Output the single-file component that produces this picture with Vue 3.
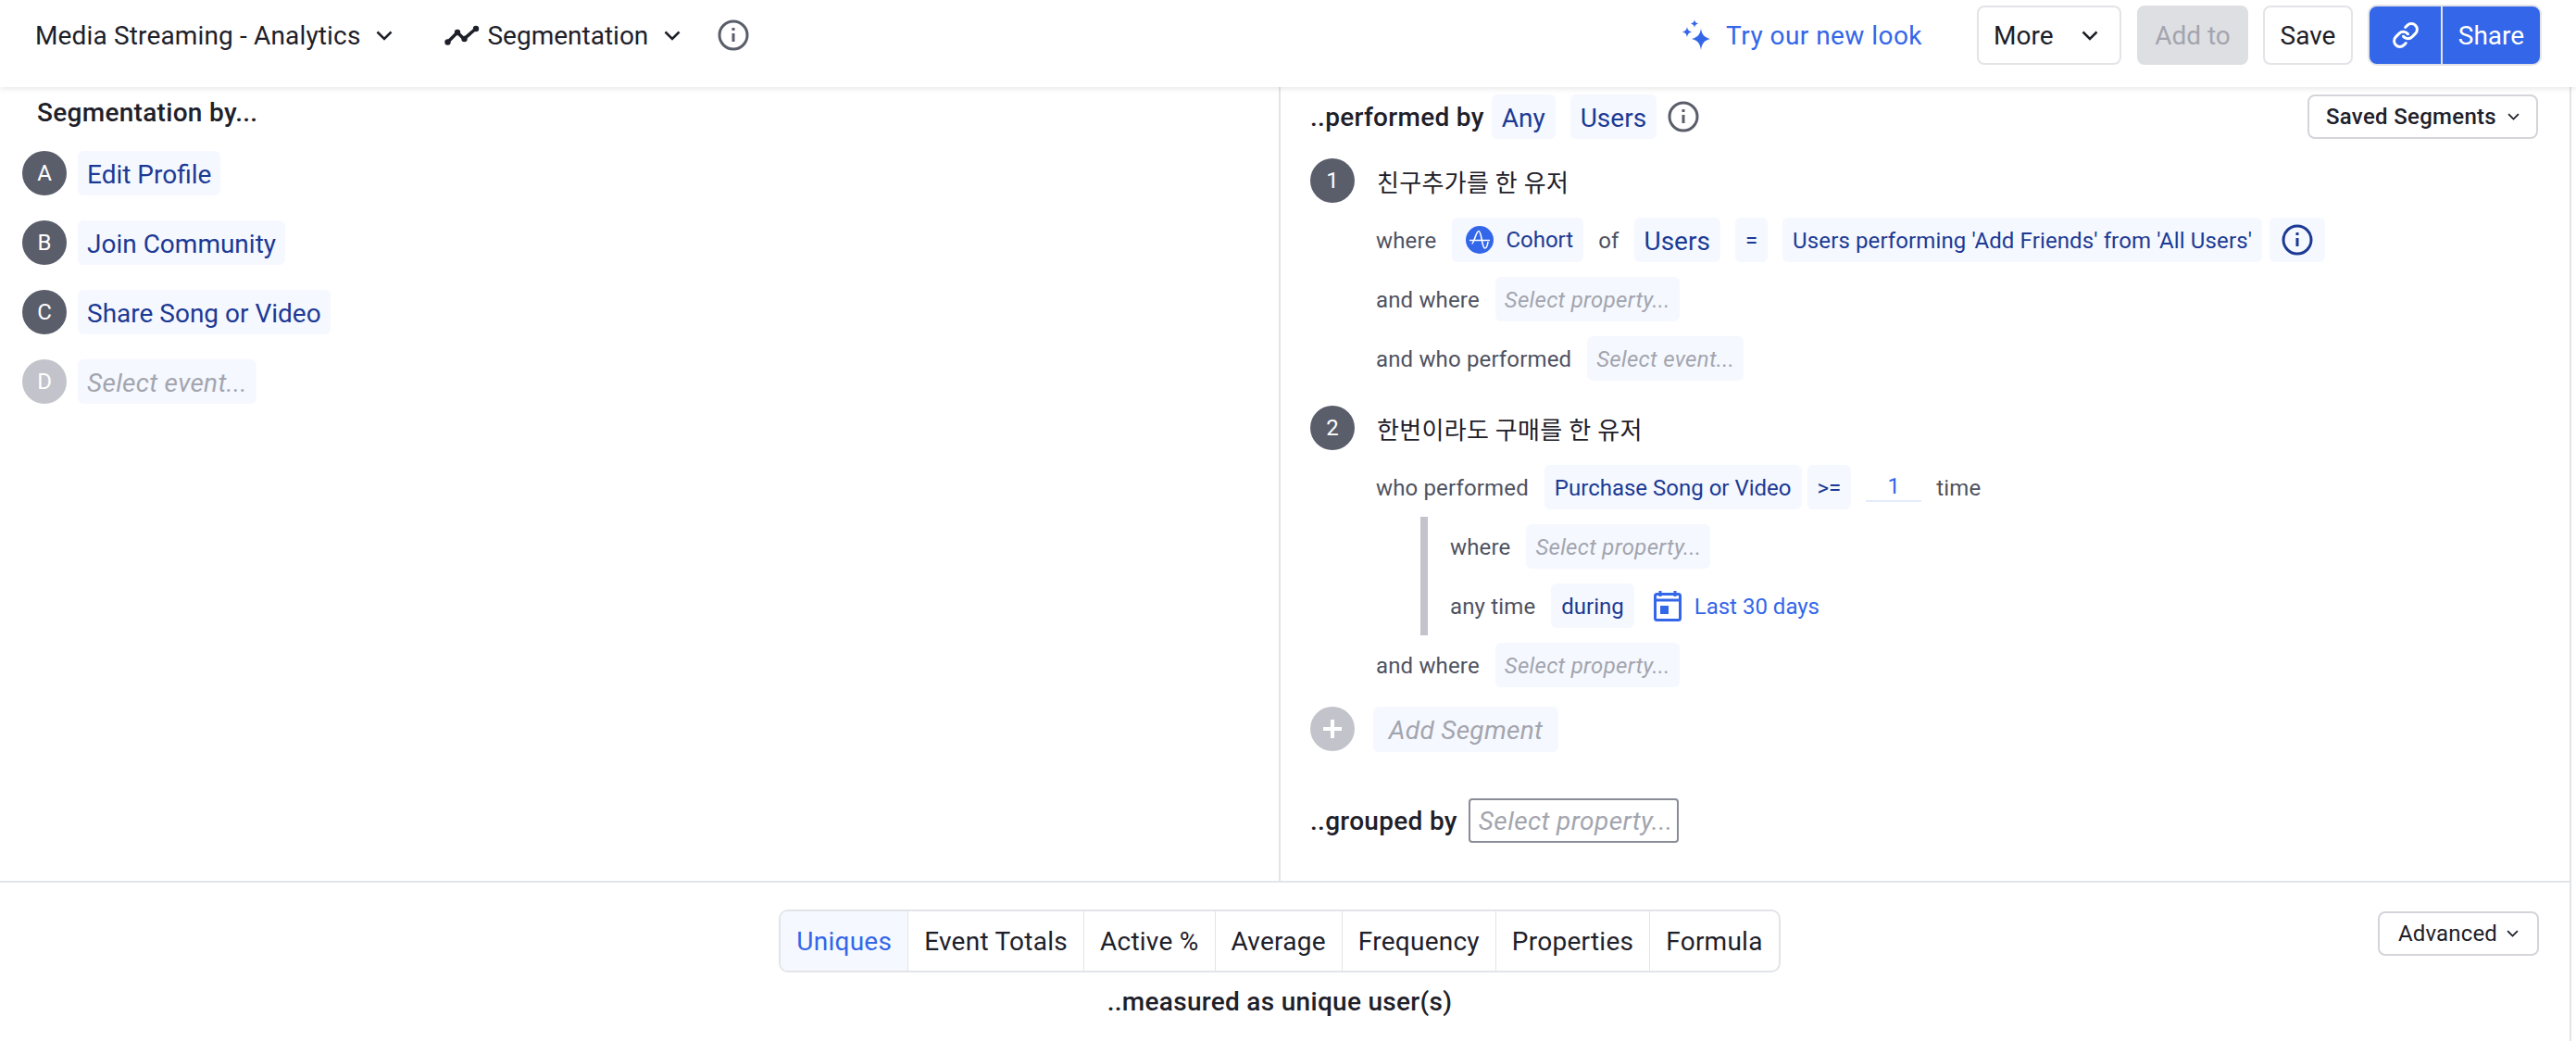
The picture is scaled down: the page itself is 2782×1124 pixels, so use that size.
<script setup>
const events = [
  { key: 'A', name: 'Edit Profile' },
  { key: 'B', name: 'Join Community' },
  { key: 'C', name: 'Share Song or Video' },
  { key: 'D', name: 'Select event...', empty: true },
];

const tabs = ['Uniques', 'Event Totals', 'Active %', 'Average', 'Frequency', 'Properties', 'Formula'];
</script>

<template>
  <div class="page">
    <header class="topbar">
      <div class="topbar-left">
        <span class="project">Media Streaming - Analytics</span>
        <svg class="chevron" width="18" height="11" viewBox="0 0 18 11"><path d="M1.5 1.5 9 9l7.5-7.5" /></svg>
        <svg class="chart-icon" width="38" height="22" viewBox="0 0 38 22">
          <path d="M3 19 14 8l7 7L34 4" fill="none" stroke="#1e2029" stroke-width="3.5" />
          <circle cx="3.5" cy="18.5" r="3.2" fill="#1e2029" />
          <circle cx="14" cy="8" r="3.2" fill="#1e2029" />
          <circle cx="21.5" cy="15" r="3.2" fill="#1e2029" />
          <circle cx="34" cy="4" r="3.2" fill="#1e2029" />
        </svg>
        <span class="chart-name">Segmentation</span>
        <svg class="chevron" width="18" height="11" viewBox="0 0 18 11"><path d="M1.5 1.5 9 9l7.5-7.5" /></svg>
        <svg class="info top-info" width="34" height="34" viewBox="0 0 34 34">
          <circle cx="17" cy="17" r="15" />
          <path d="M17 15v9M17 9v3" />
        </svg>
      </div>
      <div class="topbar-right">
        <a class="new-look">
          <svg width="34" height="34" viewBox="0 0 34 34" fill="#3366e8">
            <path d="M22 10c1 6 3 9 10 11-7 2-9 5-10 12-1-7-3-10-10-12 7-2 9-5 10-11Z" />
            <path d="M7 8c.5 3 1.500 4.500 5 5.500-3.500 1-4.500 2.500-5 6-.5-3.500-1.500-5-5-6 3.500-1 4.500-2.500 5-5.500Z" />
            <path d="M15 0c.4 2.500 1.200 3.700 4 4.500-2.800.8-3.600 2-4 4.500-.4-2.500-1.200-3.700-4-4.500 2.800-.8 3.600-2 4-4.500Z" />
          </svg>
          <span>Try our new look</span>
        </a>
        <button class="btn more">
          More
          <svg class="chevron" width="18" height="11" viewBox="0 0 18 11"><path d="M1.500 1.500 9 9l7.500-7.500" /></svg>
        </button>
        <button class="btn add-to">Add to</button>
        <button class="btn save">Save</button>
        <div class="share-group">
          <button class="share-link">
            <svg width="30" height="30" viewBox="0 0 24 24" fill="none" stroke="#fff" stroke-width="2.400" stroke-linecap="round">
              <path d="M10 13a5 5 0 0 0 7.540.54l3-3a5 5 0 0 0-7.070-7.070l-1.720 1.710" />
              <path d="M14 11a5 5 0 0 0-7.540-.54l-3 3a5 5 0 0 0 7.070 7.070l1.710-1.710" />
            </svg>
          </button>
          <button class="share-text">Share</button>
        </div>
      </div>
    </header>

    <main class="panes">
      <section class="left-pane">
        <h3 class="left-title">Segmentation by...</h3>
        <div v-for="ev in events" :key="ev.key" class="event-row">
          <span class="badge" :class="{ light: ev.empty }">{{ ev.key }}</span>
          <span class="chip" :class="{ placeholder: ev.empty }">{{ ev.name }}</span>
        </div>
      </section>

      <section class="right-pane">
        <div class="performed">
          <span class="strong">..performed by</span>
          <span class="chip any">Any</span>
          <span class="chip users">Users</span>
          <svg class="info perf-info" width="34" height="34" viewBox="0 0 34 34">
            <circle cx="17" cy="17" r="15" />
            <path d="M17 15v9M17 9v3" />
          </svg>
          <button class="small-btn saved">
            Saved Segments
            <svg class="chevron" width="13" height="8" viewBox="0 0 18 11"><path d="M1.500 1.500 9 9l7.500-7.500" /></svg>
          </button>
        </div>

        <div class="segment-head first">
          <span class="badge">1</span>
          <span class="segment-name">친구추가를 한 유저</span>
        </div>
        <div class="clause">
          <span class="word">where</span>
          <span class="chip sm cohort">
            <svg width="30" height="30" viewBox="0 0 30 30">
              <circle cx="15" cy="15" r="15" fill="#3366e8" />
              <path d="M4 15.500h22M6.500 19C9 19 11 5.500 14 5.500S17.500 24 20.500 24c1.800 0 3-3 3.500-7" fill="none" stroke="#fff" stroke-width="1.600" />
            </svg>
            Cohort
          </span>
          <span class="word of">of</span>
          <span class="chip users-mid">Users</span>
          <span class="chip sm eq">=</span>
          <span class="chip sm long">Users performing 'Add Friends' from 'All Users'</span>
          <span class="chip info-chip">
            <svg class="info navy" width="34" height="34" viewBox="0 0 34 34">
              <circle cx="17" cy="17" r="15" />
              <path d="M17 15v9M17 9v3" />
            </svg>
          </span>
        </div>
        <div class="clause">
          <span class="word">and where</span>
          <span class="chip sm placeholder">Select property...</span>
        </div>
        <div class="clause">
          <span class="word">and who performed</span>
          <span class="chip sm placeholder">Select event...</span>
        </div>

        <div class="segment-head second">
          <span class="badge">2</span>
          <span class="segment-name">한번이라도 구매를 한 유저</span>
        </div>
        <div class="clause">
          <span class="word">who performed</span>
          <span class="chip sm">Purchase Song or Video</span>
          <span class="chip sm gte">&gt;=</span>
          <span class="count">1</span>
          <span class="word time">time</span>
        </div>
        <div class="nested">
          <div class="clause">
            <span class="word">where</span>
            <span class="chip sm placeholder">Select property...</span>
          </div>
          <div class="clause">
            <span class="word">any time</span>
            <span class="chip sm">during</span>
            <svg class="calendar" width="30" height="34" viewBox="0 0 30 34">
              <path d="M7 1v6M23 1v6" stroke="#3366e8" stroke-width="3" />
              <rect x="1.500" y="4.500" width="27" height="28" rx="2" fill="none" stroke="#3366e8" stroke-width="3" />
              <path d="M2 11h26" stroke="#3366e8" stroke-width="3" />
              <rect x="7" y="17" width="9" height="9" fill="#3366e8" />
            </svg>
            <span class="date-range">Last 30 days</span>
          </div>
        </div>
        <div class="clause">
          <span class="word">and where</span>
          <span class="chip sm placeholder">Select property...</span>
        </div>

        <div class="add-segment">
          <span class="badge light">
            <svg width="20" height="20" viewBox="0 0 20 20"><path d="M10 0v20M0 10h20" stroke="#fff" stroke-width="4" /></svg>
          </span>
          <span class="chip placeholder add-chip">Add Segment</span>
        </div>

        <div class="grouped">
          <span class="strong">..grouped by</span>
          <span class="group-input">Select property...</span>
        </div>
      </section>
    </main>

    <footer class="bottom">
      <div></div>
      <div class="measure">
        <div class="tabs">
          <span v-for="(tab, i) in tabs" :key="tab" class="tab" :class="{ active: i === 0 }">{{ tab }}</span>
        </div>
        <div class="measured">..measured as unique user(s)</div>
      </div>
      <button class="small-btn advanced">
        Advanced
        <svg class="chevron" width="13" height="8" viewBox="0 0 18 11"><path d="M1.500 1.500 9 9l7.500-7.500" /></svg>
      </button>
    </footer>
  </div>
</template>

<style scoped>
.page {
  width: 2782px;
  height: 1124px;
  background: #fff;
  color: #1e2029;
  font-family: "Roboto", "Noto Sans CJK KR", sans-serif;
  font-size: 28px;
  overflow: hidden;
}

button {
  font-family: inherit;
  cursor: pointer;
}

.topbar {
  position: relative;
  height: 94px;
  box-sizing: border-box;
  padding: 5px 37px 0 38px;
  display: flex;
  justify-content: space-between;
  align-items: flex-start;
  box-shadow: 0 2px 6px rgba(0, 0, 0, 0.09);
}

.topbar-left,
.topbar-right {
  display: flex;
  align-items: center;
  height: 66px;
}

.project {
  letter-spacing: 0.15px;
}

.chevron {
  flex: none;
}

.chevron path {
  fill: none;
  stroke: #1e2029;
  stroke-width: 2.500;
}

.topbar-left .chevron {
  margin-left: 17px;
}

.chart-icon {
  margin-left: 56px;
  margin-right: 8px;
}

.top-info {
  margin-left: 40px;
}

.info {
  flex: none;
}

.info circle,
.info path {
  fill: none;
  stroke: #5a5e6b;
  stroke-width: 3;
}

.info.navy circle,
.info.navy path {
  stroke: #1c3a94;
}

.new-look {
  display: flex;
  align-items: center;
  gap: 15px;
  color: #3366e8;
  letter-spacing: 0.45px;
  margin-right: 59px;
}

.btn {
  height: 64px;
  box-sizing: border-box;
  background: #fff;
  border: 2px solid #e3e4e8;
  border-radius: 8px;
  font-size: 28px;
  color: #1e2029;
  padding: 0;
}

.more {
  width: 156px;
  padding: 0 23px 0 16px;
  display: flex;
  align-items: center;
  justify-content: space-between;
}

.add-to {
  width: 120px;
  margin-left: 17px;
  background: #dedfe3;
  border-color: #dedfe3;
  color: #a3a5ae;
}

.save {
  width: 97px;
  margin-left: 16px;
}

.share-group {
  display: flex;
  width: 188px;
  height: 66px;
  box-sizing: border-box;
  margin-left: 16px;
  border: 2px solid #e3e4e8;
  border-radius: 10px;
  background: #3366e8;
  overflow: hidden;
}

.share-link,
.share-text {
  border: none;
  background: none;
  color: #fff;
  font-size: 28px;
  padding: 0;
  display: flex;
  align-items: center;
  justify-content: center;
}

.share-link {
  width: 79px;
  border-right: 2px solid #e3e4e8;
}

.share-text {
  flex: 1;
}

.panes {
  display: flex;
  width: 2777px;
  height: 857px;
  box-sizing: border-box;
  border-right: 2px solid #e3e4e8;
}

.left-pane {
  width: 1383px;
  box-sizing: border-box;
  padding: 8px 0 0 24px;
  border-right: 2px solid #e3e4e8;
  flex: none;
}

.left-title {
  margin: 0 0 21px 16px;
  height: 40px;
  line-height: 40px;
  font-size: 28px;
  font-weight: 500;
  letter-spacing: 0.3px;
}

.event-row {
  display: flex;
  gap: 12px;
  margin-bottom: 27px;
}

.badge {
  flex: none;
  width: 48px;
  height: 48px;
  border-radius: 50%;
  background: #5a5e6b;
  color: #fff;
  font-size: 24px;
  display: flex;
  align-items: center;
  justify-content: center;
}

.badge.light {
  background: #c3c4cb;
}

.chip {
  height: 48px;
  box-sizing: border-box;
  padding: 2px 10px 0;
  border-radius: 6px;
  background: #f5f8ff;
  color: #1c3a94;
  font-size: 28px;
  display: inline-flex;
  align-items: center;
  white-space: nowrap;
}

.chip.sm {
  font-size: 24px;
  padding: 2px 11px 0;
}

.chip.placeholder {
  color: #a3a5ae;
  font-style: italic;
  letter-spacing: 0.3px;
}

.chip.sm.placeholder {
  padding: 2px 10px 0;
}

.right-pane {
  flex: 1;
  box-sizing: border-box;
  padding: 8px 34px 0 32px;
}

.strong {
  font-size: 28px;
  font-weight: 500;
  letter-spacing: 0.3px;
  white-space: nowrap;
}

.performed {
  display: flex;
  align-items: center;
  height: 48px;
}

.any {
  margin-left: 8px;
  padding: 2px 11px 0;
}

.users {
  margin-left: 16px;
  padding: 2px 11px 0;
}

.perf-info {
  margin-left: 12px;
}

.small-btn {
  height: 48px;
  box-sizing: border-box;
  background: #fff;
  border: 2px solid #d4d5da;
  border-radius: 8px;
  color: #1e2029;
  font-size: 24px;
  display: flex;
  align-items: center;
  justify-content: center;
  gap: 12px;
  padding: 0;
}

.saved {
  margin-left: auto;
  width: 249px;
  font-weight: 500;
  letter-spacing: 0.3px;
}

.segment-head {
  display: flex;
  align-items: center;
  gap: 24px;
}

.segment-head.first {
  margin-top: 21px;
}

.segment-head.second {
  margin-top: 27px;
}

.segment-name {
  font-size: 26px;
  letter-spacing: 0.3px;
}

.clause {
  display: flex;
  align-items: center;
  height: 48px;
  margin: 16px 0 0 71px;
}

.word {
  padding-top: 2px;
  font-size: 24px;
  color: #4f5260;
  margin-right: 17px;
  letter-spacing: 0.15px;
  white-space: nowrap;
}

.chip.sm.cohort {
  gap: 13px;
  padding: 0 11px 0 15px;
}

.word.of {
  margin: 0 16px;
}

.users-mid {
  padding: 2px 11px 0;
}

.chip.sm.eq {
  margin: 0 16px;
}

.long {
  letter-spacing: 0.12px;
}

.info-chip {
  margin-left: 8px;
  padding: 0 13px;
}

.gte {
  margin-left: 6px;
  margin-right: 16px;
}

.count {
  width: 60px;
  height: 32px;
  margin-right: 16px;
  color: #3366e8;
  text-align: center;
  line-height: 30px;
  font-size: 24px;
  box-sizing: border-box;
  border-bottom: 2px solid #e3ecfd;
}

.word.time {
  margin-right: 0;
}

.nested {
  margin: 8px 0 -8px 119px;
  padding: 8px 0;
  width: fit-content;
  min-width: 500px;
  border-left: 8px solid #c3c4cb;
}

.nested .clause {
  margin: 0 0 16px 24px;
}

.nested .clause:last-child {
  margin-bottom: 0;
}

.calendar {
  margin-left: 21px;
  margin-right: 14px;
}

.date-range {
  padding-top: 2px;
  color: #3366e8;
  font-size: 24px;
}

.add-segment {
  display: flex;
  gap: 20px;
  margin-top: 21px;
}

.add-chip {
  width: 200px;
  height: 49px;
  justify-content: center;
}

.grouped {
  display: flex;
  align-items: center;
  gap: 12px;
  margin-top: 50px;
  height: 48px;
}

.group-input {
  width: 227px;
  height: 48px;
  box-sizing: border-box;
  border: 2px solid #8a8d98;
  border-radius: 4px;
  color: #a3a5ae;
  font-size: 28px;
  font-style: italic;
  letter-spacing: 0.4px;
  display: flex;
  align-items: center;
  padding-left: 9px;
  white-space: nowrap;
}

.bottom {
  width: 2777px;
  height: 173px;
  box-sizing: border-box;
  border-top: 2px solid #e3e4e8;
  border-right: 2px solid #e3e4e8;
  padding: 29px 33px 0 0;
  display: grid;
  grid-template-columns: 1fr auto 1fr;
  align-items: start;
}

.measure {
  margin-left: 22px;
  display: flex;
  flex-direction: column;
  align-items: center;
}

.tabs {
  display: flex;
  height: 68px;
  box-sizing: border-box;
  border: 2px solid #e3e4e8;
  border-radius: 10px;
  overflow: hidden;
}

.tab {
  padding: 0 17px;
  display: flex;
  align-items: center;
  border-left: 1px solid #e3e4e8;
  font-size: 28px;
  letter-spacing: 0.25px;
  white-space: nowrap;
}

.tab.active {
  border-left: none;
  background: #f5f8ff;
  color: #3366e8;
}

.measured {
  margin-top: 15px;
  font-size: 28px;
  font-weight: 500;
  letter-spacing: 0.3px;
}

.advanced {
  justify-self: end;
  width: 174px;
  margin-top: 2px;
  gap: 10px;
  letter-spacing: 0.15px;
}
</style>

<style>
html,
body {
  margin: 0;
  background: #fff;
}
</style>
